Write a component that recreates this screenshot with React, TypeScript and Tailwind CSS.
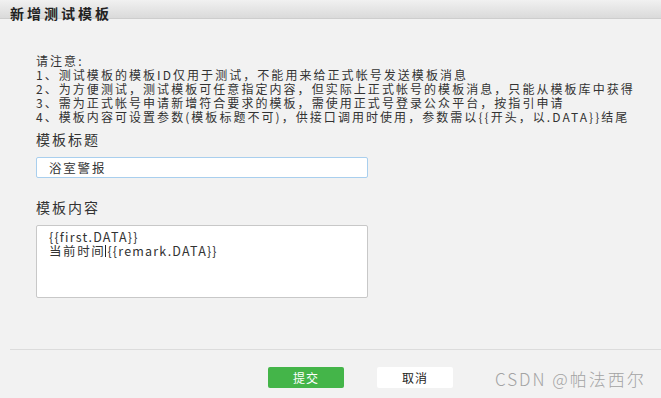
const font = { fontFamily: '"Noto Sans CJK SC", "Liberation Sans", sans-serif' };

const notes = [
  "请注意:",
  "1、测试模板的模板ID仅用于测试，不能用来给正式帐号发送模板消息",
  "2、为方便测试，测试模板可任意指定内容，但实际上正式帐号的模板消息，只能从模板库中获得",
  "3、需为正式帐号申请新增符合要求的模板，需使用正式号登录公众平台，按指引申请",
  "4、模板内容可设置参数(模板标题不可)，供接口调用时使用，参数需以{{开头，以.DATA}}结尾",
];

export default function App() {
  return (
    <div
      className="relative w-[661px] h-[398px] overflow-hidden bg-[#f2f2f2] flex flex-col text-[#333]"
      style={font}
    >
      <div className="h-[19px] shrink-0 bg-gradient-to-b from-[#f1f1f1] to-[#dadada] border-b border-[#cdcdcd] pl-[10px]">
        <span className="text-[14px] leading-[17px] font-bold tracking-[3px] text-[#222]">新增测试模板</span>
      </div>

      <div className="pl-[36px] pt-[35px]">
        {notes.map((n) => (
          <div key={n} className="text-[12px] h-[14px] leading-[14px] tracking-[2.05px] whitespace-nowrap">
            {n}
          </div>
        ))}

        <div className="mt-[5px] text-[14px] leading-[20px] tracking-[2px]">模板标题</div>
        <div className="mt-[8px] w-[332px] h-[21px] bg-white border border-[#a9cfee] rounded-[2px] pl-[12px] text-[12.5px] leading-[19px] tracking-[1.8px]">
          浴室警报
        </div>

        <div className="mt-[19px] text-[14px] leading-[20px] tracking-[2px]">模板内容</div>
        <div className="mt-[8px] w-[332px] h-[73px] bg-white border border-[#c8c8c8] rounded-[2px] pl-[12px] pt-[4px] text-[12.5px] leading-[14px] tracking-[1.2px]">
          <div>{"{{first.DATA}}"}</div>
          <div className="flex items-center">
            <span className="tracking-[1.6px]">当前时间</span>
            <span className="w-px h-[12px] bg-[#222] mr-px" />
            <span>{"{{remark.DATA}}"}</span>
          </div>
        </div>
      </div>

      <div className="mt-[51px] ml-[10px] border-t border-[#dcdcdc]" />

      <div className="flex gap-[33px] pl-[268px] mt-[17px]">
        <button className="w-[76px] h-[21px] rounded-[2px] bg-[#44b549] text-white text-[12px] leading-[21px] tracking-[1px]">
          提交
        </button>
        <button className="w-[76px] h-[21px] rounded-[2px] bg-white text-[#222] text-[12px] leading-[21px] tracking-[1px]">
          取消
        </button>
      </div>

      <div className="absolute left-[495px] top-[368px] text-[17px] leading-[22px] font-light text-[#a3a3a3] tracking-[2px] whitespace-nowrap">
        CSDN @帕法西尔
      </div>
    </div>
  );
}
